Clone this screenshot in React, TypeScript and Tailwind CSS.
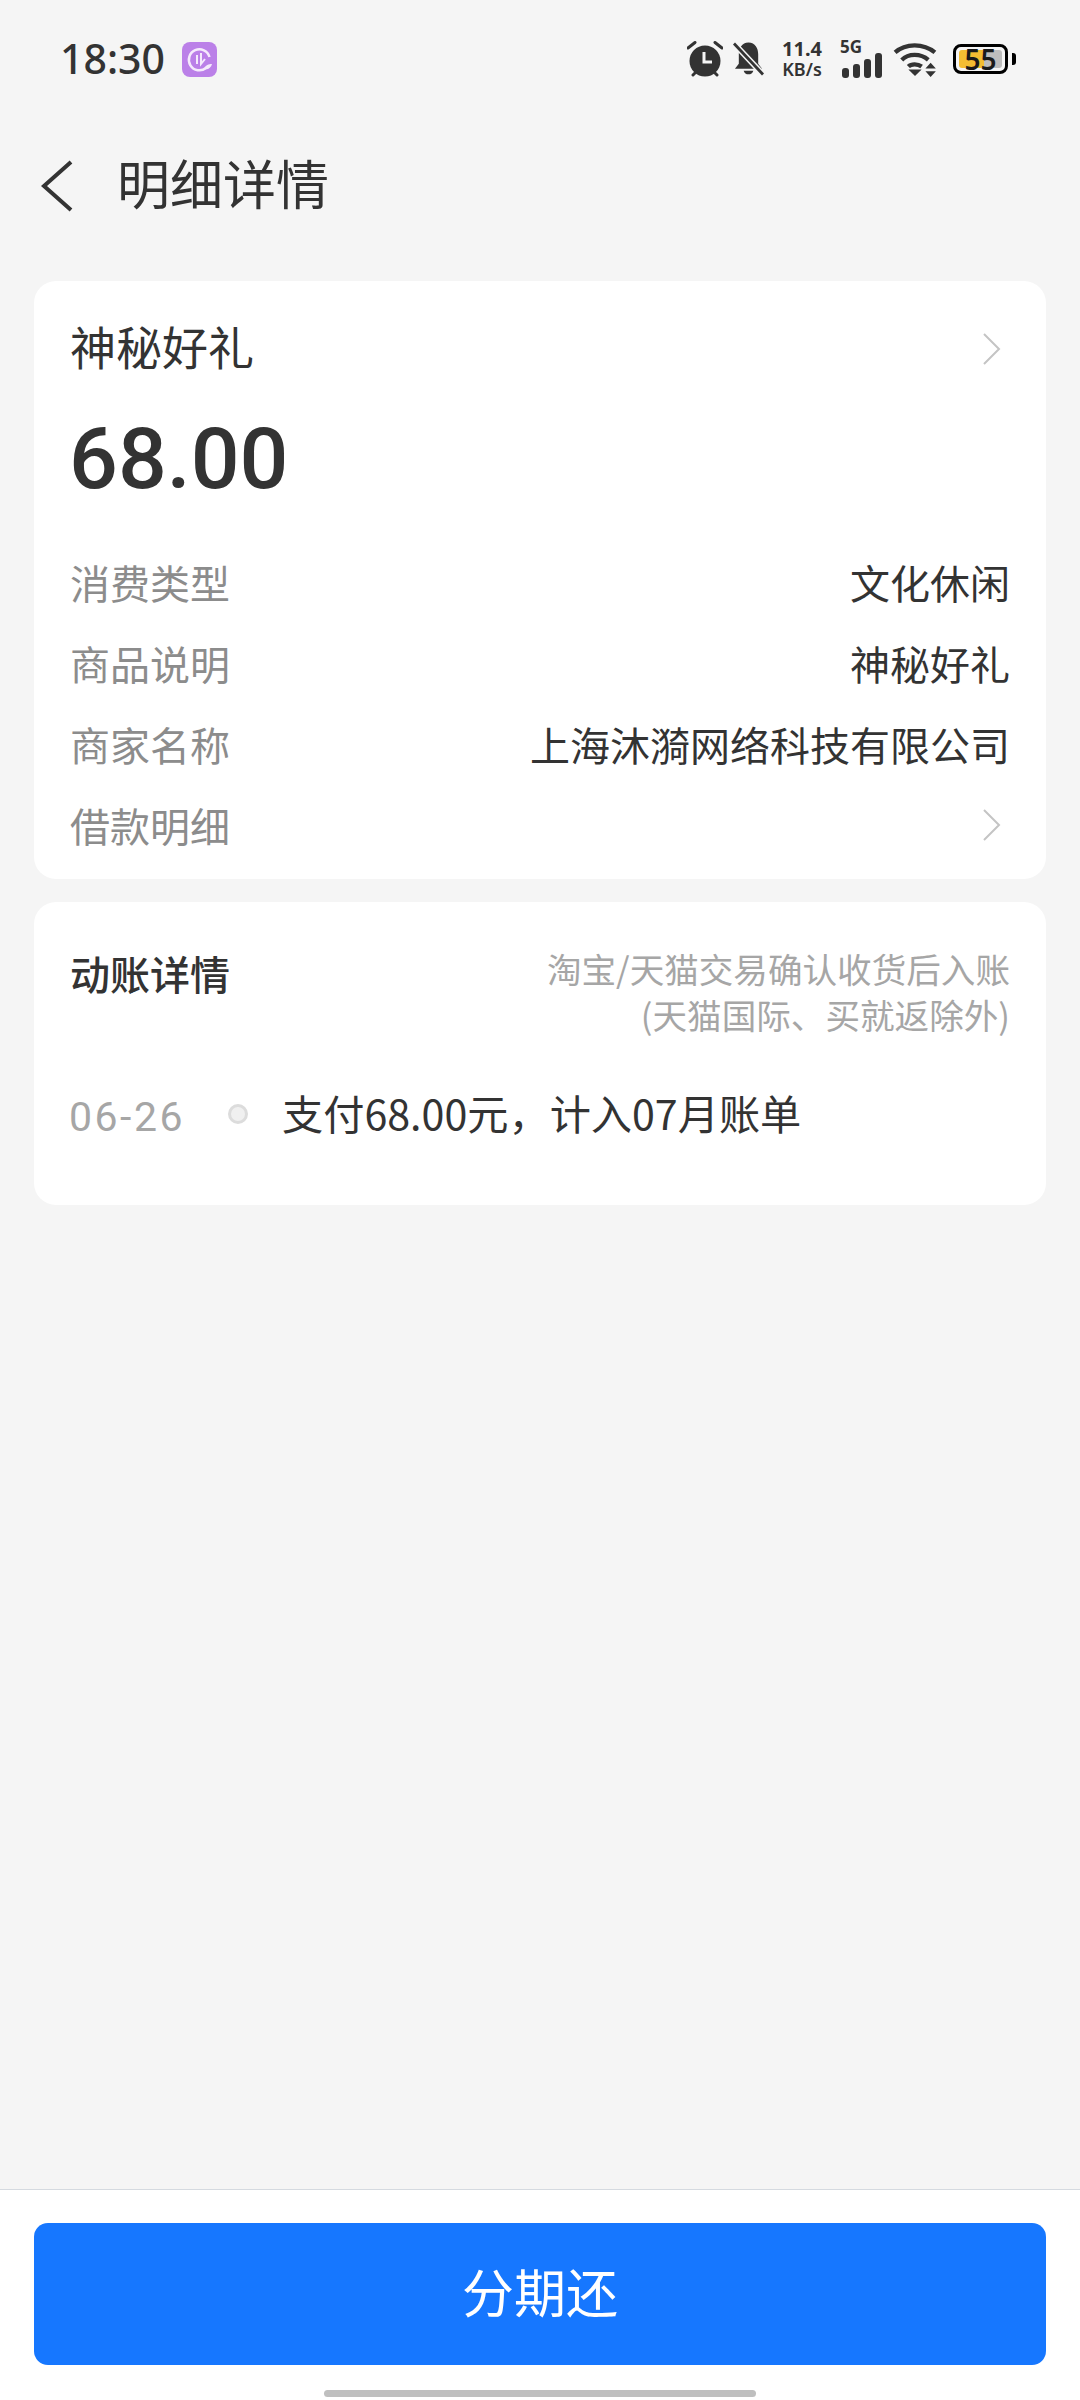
import React from 'react';

const cjk = { fontFamily: '"Noto Sans CJK SC", "Noto Sans", sans-serif' };

const ChevronRight = () => (
  <svg width="18" height="32" viewBox="0 0 18 32" fill="none" stroke="#c4c4c4" strokeWidth="2" className="mr-[9px]">
    <path d="M1 1 L16 16 L1 31" />
  </svg>
);

const AlarmIcon = () => (
  <svg width="36" height="36" viewBox="0 0 36 36">
    <circle cx="18" cy="20" r="15.5" fill="#333" />
    <path d="M1 7 L8 1.5 M35 7 L28 1.5 M6 34 L9 31 M30 34 L27 31" stroke="#333" strokeWidth="3" strokeLinecap="round" />
    <path d="M17 11 V21 H25" fill="none" stroke="#f5f5f5" strokeWidth="3" />
  </svg>
);

const BellOffIcon = () => (
  <svg width="31" height="36" viewBox="0 0 32 36">
    <path d="M16 1 C9 1 6 7 6 13 V23 L2 28 H30 L26 23 V13 C26 7 23 1 16 1 Z M11 30 H21 C20 35 12 35 11 30 Z" fill="#333" />
    <path d="M1 2 L31 34" stroke="#f5f5f5" strokeWidth="6" />
    <path d="M1 2 L31 34" stroke="#333" strokeWidth="3" />
  </svg>
);

const SignalIcon = () => (
  <svg width="40" height="25" viewBox="0 0 40 25" fill="#333">
    <rect x="0" y="15" width="7" height="10" rx="3" />
    <rect x="11" y="11" width="7" height="14" rx="3" />
    <rect x="22" y="6" width="7" height="19" rx="3" />
    <rect x="33" y="0" width="7" height="25" rx="3" />
  </svg>
);

const WifiIcon = () => (
  <svg width="44" height="36" viewBox="0 0 46 38" fill="none" stroke="#333" strokeWidth="4.5">
    <path d="M2 12 C13 2 32 2 44 12" />
    <path d="M9 20 C16 13 29 13 37 20" />
    <path d="M16 27 C19 24 26 24 30 27" />
    <path d="M16 30 H30 L23 37 Z" fill="#333" stroke="none" />
    <path d="M34 29 H45 L39.5 23 Z M34 32 H45 L39.5 38 Z" fill="#333" stroke="none" />
  </svg>
);

const BatteryIcon = () => (
  <div className="flex items-center">
    <div className="relative flex h-[30px] w-[55px] rounded-[8px] border-[3px] border-black bg-[#f5f5f5] p-[3px]">
      <div className="h-full w-[58%] rounded-l-[3px] bg-[#f3bd32]" />
      <div className="h-full flex-1 rounded-r-[3px] bg-[#bdbdbd]" />
      <span
        className="absolute inset-0 flex items-center justify-center text-[28px] leading-none font-semibold text-[#1a1a1a]"
        style={{ fontFamily: '"Noto Sans", sans-serif' }}
      >
        55
      </span>
    </div>
    <div className="ml-[4px] h-[12px] w-[4px] rounded-r-[3px] bg-black" />
  </div>
);

const StatusBar = () => (
  <div className="flex h-[118px] items-center justify-between pr-[64px] pl-[60px]">
    <div className="flex items-center">
      <span className="text-[41px] font-medium text-[#333]" style={{ fontFamily: '"Noto Sans", sans-serif' }}>18:30</span>
      <div className="ml-[17px] flex h-[35px] w-[35px] items-center justify-center rounded-[8px] bg-[#bb80e8]">
        <svg width="27" height="27" viewBox="0 0 27 27" fill="none" stroke="#f5eafc" strokeWidth="2.5">
          <path d="M20 22 A10.5 10.5 0 1 1 23.5 11" />
          <path d="M11 9 V18 M15 7 V18 L19 13" strokeWidth="2" />
          <path d="M18 23 C19 19 23 18 26 18 C25 22 22 24 18 23 Z" fill="#f5eafc" stroke="none" />
        </svg>
      </div>
    </div>
    <div className="flex items-center">
      <AlarmIcon />
      <div className="ml-[10px]"><BellOffIcon /></div>
      <div
        className="ml-[16px] flex w-[44px] flex-col items-center text-[#333]"
        style={{ fontFamily: '"Noto Sans", sans-serif' }}
      >
        <span className="text-[20px] leading-[20px] font-bold">11.4</span>
        <span className="text-[18px] leading-[20px] font-semibold">KB/s</span>
      </div>
      <div className="ml-[16px] flex w-[42px] flex-col" style={{ fontFamily: '"Noto Sans", sans-serif' }}>
        <span className="h-[12px] text-[17px] leading-[12px] font-bold text-[#333]">5G</span>
        <div className="pl-[2px]"><SignalIcon /></div>
      </div>
      <div className="ml-[11px]"><WifiIcon /></div>
      <div className="ml-[16px]"><BatteryIcon /></div>
    </div>
  </div>
);

const Header = () => (
  <div className="flex h-[136px] items-center pl-[41px]">
    <svg width="32" height="52" viewBox="0 0 32 52" fill="none" stroke="#333" strokeWidth="4">
      <path d="M30 2 L3 26 L30 50" />
    </svg>
    <h1 className="mb-[6px] ml-[44px] text-[53px] font-normal text-[#333]">明细详情</h1>
  </div>
);

const InfoRow = ({ label, value }: { label: string; value?: string }) => (
  <div className="flex h-[81px] items-center justify-between">
    <span className="text-[40px] text-[#8c8c8c]">{label}</span>
    {value ? <span className="text-[40px] text-[#333]">{value}</span> : <ChevronRight />}
  </div>
);

export default function App() {
  return (
    <div className="flex h-[2400px] w-[1080px] flex-col bg-[#f5f5f5]" style={cjk}>
      <StatusBar />
      <Header />

      <div className="flex flex-1 flex-col gap-[23px] px-[34px] pt-[27px]">
        <section className="rounded-[22px] bg-white px-[36px] pt-[24px] pb-[14px]">
          <div className="flex h-[81px] items-center justify-between">
            <span className="text-[46px] text-[#333]">神秘好礼</span>
            <div className="mt-[6px]"><ChevronRight /></div>
          </div>
          <div
            className="mt-[23px] -ml-[1px] flex h-[100px] items-center text-[86px] leading-none font-medium text-[#333]"
            style={{ fontFamily: 'Roboto, sans-serif' }}
          >
            68.00
          </div>
          <div className="mt-[32px]">
            <InfoRow label="消费类型" value="文化休闲" />
            <InfoRow label="商品说明" value="神秘好礼" />
            <InfoRow label="商家名称" value="上海沐漪网络科技有限公司" />
            <InfoRow label="借款明细" />
          </div>
        </section>

        <section className="rounded-[22px] bg-white px-[36px] pt-[43px] pb-[61px]">
          <div className="flex items-start justify-between">
            <span className="text-[40px] leading-[56px] font-medium text-[#333]">动账详情</span>
            <p className="text-right text-[34.6px] leading-[46px] text-[#a6a6a6]">
              淘宝/天猫交易确认收货后入账
              <br />
              (天猫国际、买就返除外)
            </p>
          </div>
          <div className="mt-[47px] flex h-[60px] items-center">
            <span
              className="mt-[8px] -ml-[1px] w-[114px] text-[41px] tracking-[2.5px] whitespace-nowrap text-[#a6a6a6]"
              style={{ fontFamily: 'Roboto, sans-serif' }}
            >
              06-26
            </span>
            <span className="ml-[45px] h-[20px] w-[20px] rounded-full border-[3px] border-[#dcdcdc] bg-[#f0f0f0]" />
            <span className="mb-[3px] ml-[34px] text-[41.2px] text-[#333]">支付68.00元，计入07月账单</span>
          </div>
        </section>
      </div>

      <footer className="h-[211px] border-t border-[#d5dae0] bg-white px-[34px] pt-[33px]">
        <button className="flex h-[142px] w-full items-center justify-center rounded-[14px] bg-[#1677ff] pb-[6px] text-[52px] text-white">
          分期还
        </button>
        <div className="mx-auto mt-[25px] h-[7px] w-[432px] rounded-full bg-[#bfbfbf]" />
      </footer>
    </div>
  );
}
